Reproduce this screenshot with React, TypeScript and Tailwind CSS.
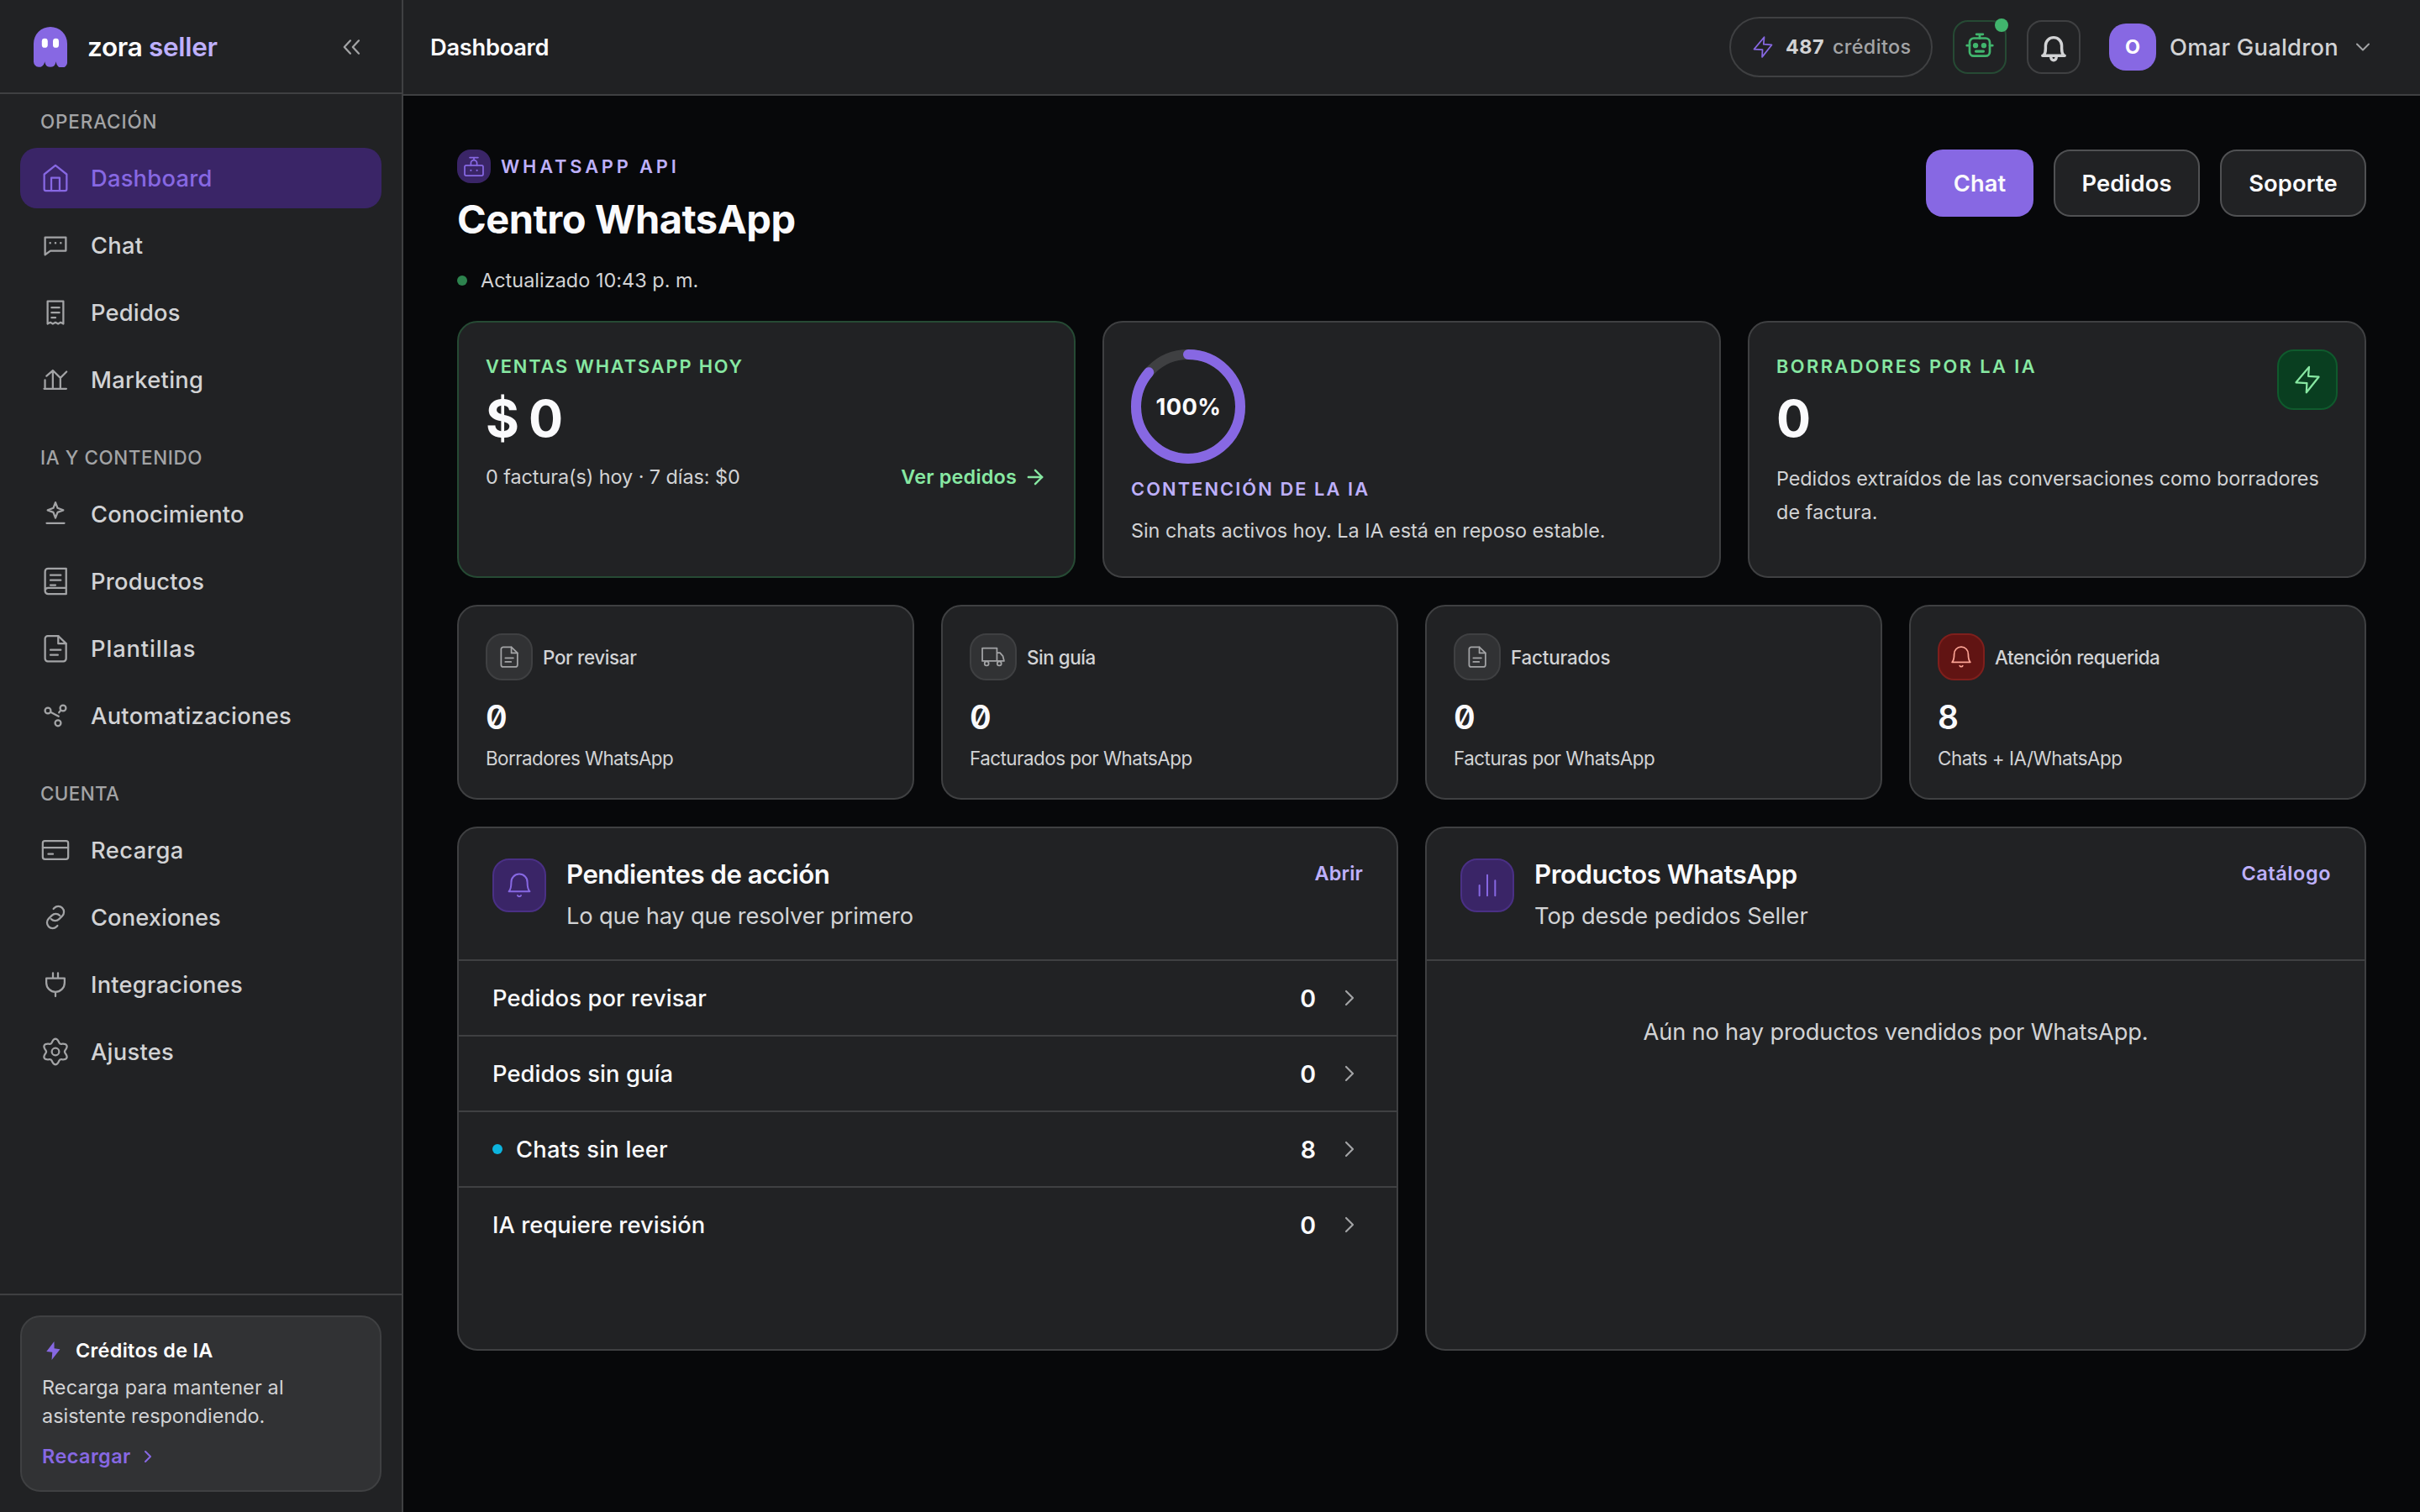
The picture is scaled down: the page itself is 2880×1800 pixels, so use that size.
import type { ReactNode } from "react";
import { ArrowRight, ChevronDown, ChevronRight } from "lucide-react";

type IconProps = { className?: string; width?: number; children?: ReactNode };

function Icon({ className = "size-9", width = 1.5, children }: IconProps) {
  return (
    <svg
      viewBox="0 0 24 24"
      fill="none"
      stroke="currentColor"
      strokeWidth={width}
      strokeLinecap="round"
      strokeLinejoin="round"
      className={`shrink-0 overflow-visible ${className}`}
    >
      {children}
    </svg>
  );
}

const HomeIcon = () => (
  <Icon>
    <path d="M3.1 9 12 1.9 20.9 9v11.7a1.4 1.4 0 0 1-1.4 1.4h-15a1.4 1.4 0 0 1-1.4-1.4z" />
    <path d="M8.7 22V11.8h6.6V22" />
  </Icon>
);

const ChatIcon = () => (
  <Icon>
    <path d="M3.75 5.7h16.5v10.7H8l-4.25 3.1z" />
    <path strokeWidth="1.7" d="M7.8 10.1h.01M12 10.1h.01M16.2 10.1h.01" />
  </Icon>
);

const ReceiptIcon = () => (
  <Icon>
    <path d="M5.75 3h12.5v18l-2.1-1.1L14.1 21 12 19.9 9.9 21l-2-1.1L5.75 21z" />
    <path d="M8.9 8.1h6.2M8.9 12.1h6.2M8.9 16.1H12" />
  </Icon>
);

const MarketingIcon = () => (
  <Icon>
    <path d="M3 19.2h17.6M3.7 19.2v-6.9M9.9 19.2V4.8M15.9 19.2v-8.6M4.9 9.1l5-4.4 6 5.9 4.9-4.9" />
  </Icon>
);

const SparkIcon = () => (
  <Icon>
    <path d="m12 2.7 1.7 4.5 4.5 1.7-4.5 1.7L12 15.1l-1.7-4.5-4.5-1.7 4.5-1.7zM5 19.2h14" />
  </Icon>
);

const BookIcon = () => (
  <Icon>
    <path d="M6.2 17.3h14.3V1.9H6.1a2.35 2.35 0 0 0-2.35 2.35v15.5a2.45 2.45 0 0 1 2.45-2.45zM3.75 19.75a2.45 2.45 0 0 0 2.45 2.4h14.3v-4.8" />
    <path d="M8 7.1h8.2M8 11.1h8.2M8 15h4" />
  </Icon>
);

const DocIcon = ({ className }: { className?: string }) => (
  <Icon className={className}>
    <path d="M14.2 2H5.9a2.15 2.15 0 0 0-2.15 2.15v15.9a2.15 2.15 0 0 0 2.15 2.15h12.4a2.15 2.15 0 0 0 2.15-2.15V8.1z" />
    <path d="M14.2 2v6.1h6.1M8 13.1h8.2M8 17.1h5.9" />
  </Icon>
);

const NodesIcon = () => (
  <Icon>
    <circle cx="6" cy="8" r="2.3" />
    <circle cx="18" cy="6" r="2.3" />
    <circle cx="14" cy="17.9" r="2.3" />
    <path d="m8.4 9.3 6.1 3.2M16.2 7.7l-1.4 1.8" />
  </Icon>
);

const CardIcon = () => (
  <Icon>
    <rect x="1.9" y="4.75" width="20.2" height="14.5" rx="1.7" />
    <path d="M1.9 10h20.2M6.3 15.1H10" />
  </Icon>
);

const LinkIcon = () => (
  <Icon>
    <path d="m10.4 5.3.7-.7a4.45 4.45 0 0 1 6.3 6.3l-2.5 2.5a4.45 4.45 0 0 1-6.3 0" />
    <path d="m13.6 18.7-.7.7a4.45 4.45 0 0 1-6.3-6.3l2.5-2.5a4.45 4.45 0 0 1 6.3 0" />
  </Icon>
);

const PlugIcon = () => (
  <Icon>
    <path d="M4.75 7h14.5v3.6a7.25 7.25 0 0 1-14.5 0zM12 18v3.4M10 2.9V7M14 2.9V7" />
  </Icon>
);

const gearOutline = Array.from({ length: 120 }, (_, i) => {
  const a = (i / 120) * Math.PI * 2;
  const r = 8.75 + 1.45 * Math.cos(6 * a);
  return `${(12 + r * Math.sin(a)).toFixed(2)} ${(12 - r * Math.cos(a)).toFixed(2)}`;
}).join("L");

const GearIcon = () => (
  <Icon>
    <path d={`M${gearOutline}z`} />
    <circle cx="12" cy="12" r="2.9" />
  </Icon>
);

const BoltIcon = ({ className }: { className?: string }) => (
  <Icon className={className}>
    <path d="M13.3 1.9 3 14.2l8.6.5-.4 7.5L21 9.8l-8.3-.6z" />
  </Icon>
);

const TruckIcon = () => (
  <Icon className="size-7">
    <path d="M4.2 16.2H.9V3.1h14.9v13.1H7M15.8 7.8h3.1l3 3.5 1.2 4.9h-2.3M15.8 16.2h1.1M.9 16.2h22.2" />
    <circle cx="5.3" cy="18.8" r="2.1" />
    <circle cx="18.2" cy="18.8" r="2.1" />
  </Icon>
);

const BellIcon = ({ className }: { className?: string }) => (
  <Icon className={className}>
    <path d="M2.7 17.4h18.6c-1.5-1.5-2.1-3.6-2.1-8A7.1 7.1 0 0 0 12 1.9a7.1 7.1 0 0 0-7.2 7.5c0 4.4-.6 6.5-2.1 8z" />
    <path d="M10.5 21.1a1.7 1.7 0 0 0 3 0" />
  </Icon>
);

const BarsIcon = () => (
  <Icon className="size-8">
    <path d="M5 12v9.2M12 2.8v18.4M19 7.6v13.6" />
  </Icon>
);

function Ghost() {
  return (
    <svg viewBox="0 0 40 48" className="h-12 w-10 shrink-0">
      <path
        fill="#8768e3"
        d="M0 20a20 20 0 0 1 40 0v21.5a6.5 6.5 0 0 1-13 1.4l-.4-1.7-.4 1.7a6.5 6.5 0 0 1-12.6 0l-.4-1.7-.4 1.7A6.5 6.5 0 0 1 0 41.5z"
      />
      <rect x="9.8" y="13.8" width="7" height="11" rx="3.4" fill="#fff" />
      <rect x="23" y="13.8" width="7" height="11" rx="3.4" fill="#fff" />
    </svg>
  );
}

type NavEntry = { label: string; icon: ReactNode; track: string; active?: boolean };

const groups: { title: string; track: string; items: NavEntry[] }[] = [
  {
    title: "OPERACIÓN",
    track: "tracking-[0.9px]",
    items: [
      { label: "Dashboard", icon: <HomeIcon />, track: "tracking-[0.24px]", active: true },
      { label: "Chat", icon: <ChatIcon />, track: "tracking-[0.3px]" },
      { label: "Pedidos", icon: <ReceiptIcon />, track: "tracking-[0.2px]" },
      { label: "Marketing", icon: <MarketingIcon />, track: "tracking-[0.3px]" },
    ],
  },
  {
    title: "IA Y CONTENIDO",
    track: "tracking-[0.6px]",
    items: [
      { label: "Conocimiento", icon: <SparkIcon />, track: "tracking-[0.12px]" },
      { label: "Productos", icon: <BookIcon />, track: "tracking-[0.2px]" },
      { label: "Plantillas", icon: <DocIcon />, track: "tracking-[0.88px]" },
      { label: "Automatizaciones", icon: <NodesIcon />, track: "tracking-[0.3px]" },
    ],
  },
  {
    title: "CUENTA",
    track: "tracking-[0.4px]",
    items: [
      { label: "Recarga", icon: <CardIcon />, track: "tracking-[0.5px]" },
      { label: "Conexiones", icon: <LinkIcon />, track: "tracking-[0.08px]" },
      { label: "Integraciones", icon: <PlugIcon />, track: "tracking-[0.22px]" },
      { label: "Ajustes", icon: <GearIcon />, track: "tracking-[0.26px]" },
    ],
  },
];

function Sidebar() {
  return (
    <aside className="flex w-[480px] shrink-0 flex-col border-r-2 border-[#3f4042] bg-[#212224]">
      <div className="flex h-28 shrink-0 items-center border-b-2 border-[#3f4042] pt-0.5 pr-[42px] pl-10">
        <Ghost />
        <div className="ml-6 text-[31.5px] font-semibold tracking-[-0.32px] whitespace-nowrap text-white">
          zora <span className="text-[#beb0fb]">seller</span>
        </div>
        <Icon className="ml-auto size-9 text-[#a3a4a6]">
          <path d="M11.3 6.9 6.5 12l4.8 5.1M18 6.9 13.2 12l4.8 5.1" />
        </Icon>
      </div>
      <nav className="flex flex-col gap-6 px-6">
        {groups.map((g) => (
          <div key={g.title}>
            <div className={`flex h-16 items-center pt-0.5 pl-6 text-[22.4px] font-medium text-[#a3a4a6] ${g.track}`}>{g.title}</div>
            <ul className="flex flex-col gap-2">
              {g.items.map((n) => (
                <li
                  key={n.label}
                  className={`flex h-[72px] items-center gap-6 rounded-[20px] pl-6 ${n.active ? "bg-[#3a2567] text-[#8768e3]" : "text-[#a3a4a6]"}`}
                >
                  {n.icon}
                  <span className={`pt-0.5 text-[27.3px] font-medium ${n.track} ${n.active ? "" : "text-[#d2d3d5]"}`}>{n.label}</span>
                </li>
              ))}
            </ul>
          </div>
        ))}
      </nav>
      <div className="mt-auto h-[260px] border-t-2 border-[#3f4042] p-6">
        <div className="h-[210px] rounded-3xl border-2 border-[#3f4042] bg-[#313234] px-6 pt-[22px]">
          <div className="flex h-9 items-center gap-3">
            <svg viewBox="0 0 24 24" className="size-7 text-[#8768e3]" fill="currentColor">
              <path d="M12.4 2.6 4.5 12.9l6 .7-.6 7.8 8.5-11-5.9-.7z" />
            </svg>
            <span className="text-[23.4px] font-semibold tracking-[0.3px] text-white">Créditos de IA</span>
          </div>
          <p className="mt-[9px] text-[23.4px] leading-[34px] whitespace-nowrap text-[#d2d3d5]">
            <span className="tracking-[0.16px]">Recarga para mantener al</span>
            <br />
            <span className="tracking-[0.01px]">asistente respondiendo.</span>
          </p>
          <div className="mt-[13px] flex h-9 items-center gap-2 text-[#8768e3]">
            <span className="text-[23.4px] font-semibold tracking-[0.45px]">Recargar</span>
            <ChevronRight className="size-6" strokeWidth={2.1} />
          </div>
        </div>
      </div>
    </aside>
  );
}

function TopBar() {
  return (
    <header className="flex h-[114px] shrink-0 items-center border-b-2 border-[#3f4042] bg-[#202123] pr-[54px] pl-8">
      <h2 className="pt-0.5 text-[27.3px] font-semibold tracking-[-0.3px] text-[#fafafc]">Dashboard</h2>
      <div className="ml-auto flex h-[72px] w-[242px] items-center rounded-full border-2 border-[#3f4042] bg-[#212224] pl-6">
        <BoltIcon className="size-7 text-[#8768e3]" />
        <span className="ml-[13px] text-[23.4px] font-bold tracking-[0.43px] text-[#d2d3d5]">487</span>
        <span className="ml-[10px] text-[23.4px] font-medium tracking-[0.36px] text-[#a3a4a6]">créditos</span>
      </div>
      <div className="relative ml-6 flex size-16 items-center justify-center rounded-[18px] border-2 border-[#264a34] bg-[#212224] text-[#41b56d]">
        <Icon width={1.8}>
          <rect x="4" y="5" width="16" height="14.1" rx="3.3" />
          <path d="M9.4 1.9h5.2M12 1.9V5M1.8 10.8H4M20 10.8h2.2" />
          <path strokeWidth="2.1" d="M9 15.4h6" />
          <circle cx="8.7" cy="10.8" r="2.1" fill="currentColor" stroke="none" />
          <circle cx="15.3" cy="10.8" r="2.1" fill="currentColor" stroke="none" />
        </Icon>
        <span className="absolute -top-1 -right-1 size-4 rounded-full bg-[#41b56d]" />
      </div>
      <div className="ml-6 flex size-16 items-center justify-center rounded-[18px] border-2 border-[#3f4042] bg-[#212224] text-[#d2d3d5]">
        <Icon width={2.3}>
          <path d="M3.2 18.8h17.6M4.2 18.4c1.2-1.4 1.4-3.2 1.4-5.2v-2.4a6.4 6.4 0 0 1 12.8 0v2.4c0 2 .2 3.8 1.4 5.2M9.9 19v1.4a2.1 2.1 0 0 0 4.2 0V19" />
        </Icon>
      </div>
      <div className="ml-[34px] flex size-14 items-center justify-center rounded-[20px] bg-[#8768e3] text-[23.4px] font-bold text-white">O</div>
      <span className="ml-4 w-[200px] pt-0.5 text-[27.3px] font-medium tracking-[0.26px] whitespace-nowrap text-[#d2d3d5]">Omar Gualdron</span>
      <ChevronDown className="ml-4 size-7 text-[#a3a4a6]" strokeWidth={1.7} />
    </header>
  );
}

const cardBase = "rounded-3xl border-2 bg-[#212224]";

function HeroCards() {
  return (
    <div className="mt-[30px] grid grid-cols-3 gap-8">
      <section className={`${cardBase} h-[306px] border-[#264a34] p-8`}>
        <div className="text-[21.8px] leading-10 font-semibold tracking-[1.88px] text-[#87e8a2]">VENTAS WHATSAPP HOY</div>
        <div className="mt-1.5 flex gap-[11px] text-[61px] leading-[72px] font-bold text-[#fafafc]">
          <span>$</span>
          <span>0</span>
        </div>
        <div className="mt-4 flex h-9 items-center text-[23.4px]">
          <span className="tracking-[-0.06px] text-[#d2d3d5]">0 factura(s) hoy · 7 días: $0</span>
          <span className="ml-auto font-semibold tracking-[0.2px] text-[#87e8a2]">Ver pedidos</span>
          <ArrowRight className="ml-2 size-7 text-[#87e8a2]" strokeWidth={2.1} />
        </div>
      </section>
      <section className={`${cardBase} h-[306px] border-[#3f4042] p-8`}>
        <div className="grid size-[136px] place-items-center">
          <svg viewBox="0 0 136 136" fill="none" strokeWidth="12" className="col-start-1 row-start-1 size-[136px] -rotate-90">
            <circle cx="68" cy="68" r="62" stroke="#3f4042" />
            <circle cx="68" cy="68" r="62" stroke="#8768e3" strokeLinecap="round" pathLength="100" strokeDasharray="86.4 100" />
          </svg>
          <span className="col-start-1 row-start-1 pt-0.5 pl-px text-[27.3px] font-bold tracking-[0.45px] text-[#fafafc]">100%</span>
        </div>
        <div className="mt-3 text-[21.8px] leading-9 font-semibold tracking-[2.09px] text-[#beb0fb]">CONTENCIÓN DE LA IA</div>
        <p className="mt-3 text-[23.4px] leading-10 tracking-[-0.03px] text-[#d2d3d5]">Sin chats activos hoy. La IA está en reposo estable.</p>
      </section>
      <section className={`${cardBase} h-[306px] border-[#3f4042] p-8`}>
        <div className="flex items-start justify-between">
          <div>
            <div className="text-[21.8px] leading-10 font-semibold tracking-[2.45px] text-[#87e8a2]">BORRADORES POR LA IA</div>
            <div className="mt-1.5 text-[61px] leading-[72px] font-bold text-[#fafafc]">0</div>
          </div>
          <div className="flex size-[72px] items-center justify-center rounded-[20px] border-2 border-[#0f5a2d] bg-[#093e20] text-[#87e8a2]">
            <BoltIcon className="size-9" />
          </div>
        </div>
        <p className="mt-4 text-[23.4px] leading-10 whitespace-nowrap text-[#d2d3d5]">
          <span className="tracking-[-0.05px]">Pedidos extraídos de las conversaciones como borradores</span>
          <br />
          <span className="tracking-[0.1px]">de factura.</span>
        </p>
      </section>
    </div>
  );
}

const neutralBox = "border-[#3f4042] bg-[#313234] text-[#a3a4a6]";

const stats = [
  { label: "Por revisar", lt: "tracking-[-0.34px]", value: "0", note: "Borradores WhatsApp", nt: "tracking-[-0.57px]", icon: <DocIcon className="size-7" />, box: neutralBox },
  { label: "Sin guía", lt: "tracking-[-0.42px]", value: "0", note: "Facturados por WhatsApp", nt: "tracking-[-0.51px]", icon: <TruckIcon />, box: neutralBox },
  { label: "Facturados", lt: "tracking-[-0.18px]", value: "0", note: "Facturas por WhatsApp", nt: "tracking-[-0.48px]", icon: <DocIcon className="size-7" />, box: neutralBox },
  { label: "Atención requerida", lt: "tracking-[-0.42px]", value: "8", note: "Chats + IA/WhatsApp", nt: "tracking-[-0.45px]", icon: <BellIcon className="size-7" />, box: "border-[#7f1f1c] bg-[#611413] text-[#fda495]" },
];

function StatCards() {
  return (
    <div className="mt-8 grid grid-cols-4 gap-8">
      {stats.map((s) => (
        <section key={s.label} className={`${cardBase} h-[232px] border-[#3f4042] p-8`}>
          <div className="flex items-center gap-3">
            <div className={`flex size-14 items-center justify-center rounded-[20px] border-2 ${s.box}`}>{s.icon}</div>
            <span className={`pt-0.5 text-[22.4px] font-medium text-[#d2d3d5] ${s.lt}`}>{s.label}</span>
          </div>
          <div className="mt-[22px] text-[39px] leading-[44px] font-semibold text-[#fafafc] slashed-zero">{s.value}</div>
          <div className={`mt-[11px] text-[22.4px] leading-8 text-[#d2d3d5] ${s.nt}`}>{s.note}</div>
        </section>
      ))}
    </div>
  );
}

type PanelProps = { icon: ReactNode; title: string; tt: string; sub: string; st: string; link: string; kt: string; children: ReactNode };

function Panel({ icon, title, tt, sub, st, link, kt, children }: PanelProps) {
  return (
    <section className={`${cardBase} h-[624px] border-[#3f4042]`}>
      <div className="flex h-[158px] items-start border-b-2 border-[#3f4042] px-10 pt-9">
        <div className="flex size-16 items-center justify-center rounded-[20px] border-2 border-[#4a3085] bg-[#3a2567] text-[#8768e3]">{icon}</div>
        <div className="ml-6">
          <h3 className={`text-[31.2px] leading-[38px] font-semibold text-[#fafafc] ${tt}`}>{title}</h3>
          <p className={`mt-[9px] text-[27.3px] leading-[44px] text-[#d2d3d5] ${st}`}>{sub}</p>
        </div>
        <span className={`ml-auto text-[23.4px] leading-9 font-semibold text-[#beb0fb] ${kt}`}>{link}</span>
      </div>
      {children}
    </section>
  );
}

const pending = [
  { label: "Pedidos por revisar", track: "tracking-[0.12px]", count: 0 },
  { label: "Pedidos sin guía", track: "tracking-[0.1px]", count: 0 },
  { label: "Chats sin leer", track: "tracking-[0.22px]", count: 8, dot: true },
  { label: "IA requiere revisión", track: "tracking-[0.05px]", count: 0 },
];

function Panels() {
  return (
    <div className="mt-8 grid grid-cols-2 gap-8">
      <Panel
        icon={<BellIcon className="size-8" />}
        title="Pendientes de acción"
        tt="tracking-[-0.48px]"
        sub="Lo que hay que resolver primero"
        st="tracking-[-0.18px]"
        link="Abrir"
        kt="tracking-[0.2px]"
      >
        <ul className="divide-y-2 divide-[#3f4042]">
          {pending.map((p) => (
            <li key={p.label} className="box-content flex h-[88px] items-center">
              {p.dot && <span className="ml-10 size-3 rounded-full bg-[#0cb4de]" />}
              <span className={`pt-0.5 text-[27.3px] font-medium text-[#fafafc] ${p.dot ? "ml-4" : "ml-10"} ${p.track}`}>{p.label}</span>
              <span className="ml-auto pt-0.5 text-[28.5px] font-semibold text-[#fafafc]">{p.count}</span>
              <ChevronRight className="mr-10 ml-6 size-8 text-[#a3a4a6]" strokeWidth={1.6} />
            </li>
          ))}
        </ul>
      </Panel>
      <Panel
        icon={<BarsIcon />}
        title="Productos WhatsApp"
        tt="tracking-[-0.43px]"
        sub="Top desde pedidos Seller"
        st="tracking-[-0.08px]"
        link="Catálogo"
        kt="tracking-[0.6px]"
      >
        <p className="pt-[61px] text-center text-[27.3px] leading-[48px] tracking-[-0.2px] text-[#d2d3d5]">Aún no hay productos vendidos por WhatsApp.</p>
      </Panel>
    </div>
  );
}

export default function App() {
  return (
    <div className="flex h-[1800px] w-[2880px] overflow-hidden bg-[#07080a] font-['Inter',sans-serif]">
      <Sidebar />
      <div className="flex min-w-0 flex-1 flex-col">
        <TopBar />
        <main className="px-16 pt-16">
          <div className="flex items-start justify-between">
            <div>
              <div className="flex h-10 items-center gap-3">
                <div className="flex size-10 items-center justify-center rounded-2xl bg-[#3a2567] text-[#8768e3]">
                  <Icon className="size-7">
                    <rect x="2.6" y="11" width="18.8" height="10.6" rx="1.6" />
                    <path d="M8.9 11V8.8a3.1 3.1 0 0 1 6.2 0V11M12 5.7V3M7.8 3h8.4" />
                    <path strokeWidth="1.9" d="M8.9 16.1h.01M15.1 16.1h.01" />
                  </Icon>
                </div>
                <span className="text-[21.8px] font-semibold tracking-[3.87px] text-[#beb0fb]">WHATSAPP API</span>
              </div>
              <h1 className="mt-2 text-[47px] leading-[70px] font-bold tracking-[-0.5px] text-[#fafafc]">Centro WhatsApp</h1>
              <div className="mt-5 flex h-9 items-center gap-4">
                <span className="size-3 rounded-full bg-[#2d834e]" />
                <span className="text-[23.4px] tracking-[0.04px] text-[#d2d3d5]">Actualizado 10:43 p. m.</span>
              </div>
            </div>
            <div className="flex gap-6 text-[27.3px] font-semibold tracking-[0.1px] text-[#fafafc]">
              <button className="h-20 w-32 rounded-[20px] bg-[#8768e3] pt-0.5">Chat</button>
              <button className="h-20 w-[174px] rounded-[20px] border-2 border-[#505153] bg-[#212224] pt-0.5">Pedidos</button>
              <button className="h-20 w-[174px] rounded-[20px] border-2 border-[#505153] bg-[#212224] pt-0.5">Soporte</button>
            </div>
          </div>
          <HeroCards />
          <StatCards />
          <Panels />
        </main>
      </div>
    </div>
  );
}
